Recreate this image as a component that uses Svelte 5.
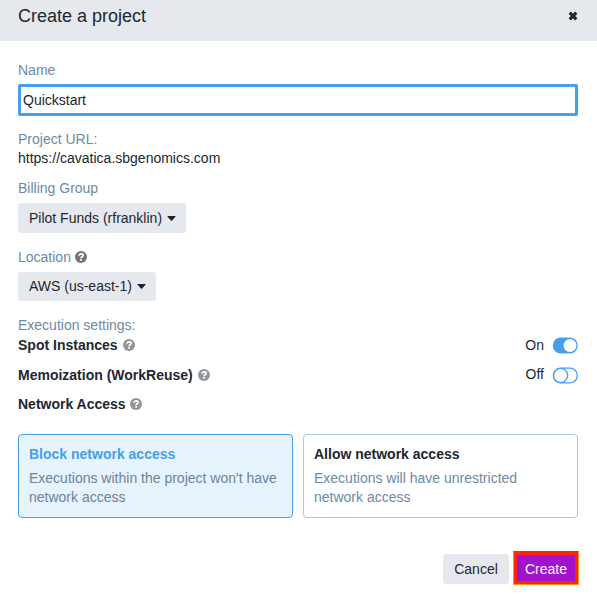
<script>
  let name = $state('Quickstart');
  let access = $state('block');
  const settings = $state([
    { label: 'Spot Instances', on: true },
    { label: 'Memoization (WorkReuse)', on: false }
  ]);
  const options = [
    { id: 'block', title: 'Block network access', lines: ["Executions within the project won't have", 'network access'] },
    { id: 'allow', title: 'Allow network access', lines: ['Executions will have unrestricted', 'network access'] }
  ];
</script>

{#snippet help(dim)}
  <svg class="help" class:dim width="12" height="12" viewBox="0 0 12 12" aria-hidden="true">
    <circle cx="6" cy="6" r="6" />
    <path d="M3.9 4.6C4.1 3.4 4.9 2.8 6.1 2.8C7.3 2.8 8.1 3.5 8.1 4.4C8.1 5.8 6.1 5.7 6.1 7.2" />
    <rect x="5.2" y="8" width="1.8" height="1.7" />
  </svg>
{/snippet}

{#snippet caret()}
  <svg class="caret" width="9" height="5" viewBox="0 0 9 5" aria-hidden="true"><path d="M.9 0H8.1Q9 0 8.4.7L4.9 4.7Q4.5 5 4.1 4.7L.6 .7Q0 0 .9 0Z" /></svg>
{/snippet}

<div class="dialog" role="dialog" aria-label="Create a project">
  <header>
    <h1>Create a project</h1>
    <button class="close" aria-label="Close">
      <svg width="10" height="10" viewBox="0 0 10 10"><path d="M1.7 1.7L8.3 8.3M8.3 1.7L1.7 8.3" /></svg>
    </button>
  </header>

  <main>
    <label class="label" for="project-name">Name</label>
    <input id="project-name" bind:value={name} />

    <div class="label url">Project URL:</div>
    <div class="address">https://cavatica.sbgenomics.com</div>

    <div class="label billing">Billing Group</div>
    <button class="select funds"><span>Pilot Funds (rfranklin)</span>{@render caret()}</button>

    <div class="label location"><span>Location</span>{@render help(false)}</div>
    <button class="select region"><span>AWS (us-east-1)</span>{@render caret()}</button>

    <div class="label execution">Execution settings:</div>
    {#each settings as setting}
      <div class="setting">
        <strong>{setting.label}</strong>{@render help(true)}
        <span class="state" class:off={!setting.on}>{setting.on ? 'On' : 'Off'}</span>
        <button class="switch" aria-label={setting.label} onclick={() => (setting.on = !setting.on)}>
          <svg width="26" height="17" viewBox="0 0 26 17">
            {#if setting.on}
              <rect x=".8" y=".5" width="25" height="16" rx="8" fill="#459fed" />
              <circle cx="18" cy="8.5" r="6.5" fill="#fff" />
            {:else}
              <rect x="1.5" y="1.1" width="23.8" height="14.8" rx="7.4" fill="#fff" stroke="#459fed" stroke-width="1.3" />
              <circle cx="8.6" cy="8.5" r="7.1" fill="#fff" stroke="#459fed" stroke-width="1.3" />
            {/if}
          </svg>
        </button>
      </div>
    {/each}
    <div class="setting network"><strong>Network Access</strong>{@render help(true)}</div>

    <div class="cards">
      {#each options as option}
        <button class="card" class:selected={access === option.id} onclick={() => (access = option.id)}>
          <strong>{option.title}</strong>
          {#each option.lines as line}<span>{line}</span>{/each}
        </button>
      {/each}
    </div>
  </main>

  <footer>
    <button class="cancel">Cancel</button>
    <button class="create">Create</button>
  </footer>
</div>

<style>
  :global(body) { background: #fff; }
  .dialog, button, input { font-family: "Liberation Sans", Arial, sans-serif; font-size: 14px; line-height: 20px; color: #1d2731; }
  .dialog { width: 597px; height: 605px; overflow: hidden; }
  *, *::before { box-sizing: border-box; }
  button { border: 0; padding: 0; margin: 0; background: none; white-space: nowrap; }
  svg { display: block; flex: none; }

  header { height: 41px; padding: 0 19px 0 18px; background: #e5e9ed; display: flex; justify-content: space-between; }
  h1 { margin: 4px 0 0; font-size: 18px; line-height: 24px; font-weight: 400; }
  .close { height: 10px; margin-top: 10.5px; }
  .close path { stroke: #1d2731; stroke-width: 3.2; }

  main { padding: 19px 19px 0 18px; display: flex; flex-direction: column; align-items: flex-start; }
  .label { height: 20px; color: #6c8aa4; display: flex; align-items: center; white-space: nowrap; }
  input { width: 560px; height: 32px; margin: 4px 0 13px; padding: 0 2px; border: 3px solid #459fed; border-radius: 2px; outline: 0; background: #fff; }
  .address { height: 20px; line-height: 18px; }
  .billing { margin-top: 9px; }
  .select { height: 30px; margin-top: 5px; padding: 0 11px; border-radius: 3px; background: #e5e9ed; display: flex; align-items: center; justify-content: space-between; }
  .funds { width: 168px; padding-right: 10.5px; }
  .region { width: 138px; height: 29px; padding: 0 10.5px 1px 11px; }
  .caret { fill: #1d2731; }
  .location { margin-top: 14px; gap: 4px; }
  .help circle { fill: #757575; }
  .help.dim circle { fill: #929599; }
  .help path { fill: none; stroke: #fff; stroke-width: 1.7; }
  .help rect { fill: #fff; }

  .execution { margin-top: 14px; }
  .setting { width: 100%; height: 20px; margin-bottom: 10px; display: flex; align-items: center; }
  .setting .help { margin-left: 5px; }
  .setting.network { margin: -1px 0 0; }
  .setting.network .help { margin-left: 4px; }
  .state { margin-left: auto; }
  .state.off { padding-bottom: 2px; }
  .switch { margin: 0 0 0 8px; }

  .cards { margin-top: 20px; display: flex; gap: 10px; }
  .card { width: 275px; height: 84px; padding: 9px 10px; border: 1px solid #b4c5d3; border-radius: 4px; background: #fff; text-align: left; display: flex; flex-direction: column; justify-content: flex-start; }
  .card strong { margin-bottom: 5px; }
  .card span { line-height: 19px; color: #6c8aa4; }
  .card.selected { border-color: #459fed; background: #e7f3fd; }
  .card.selected strong { color: #459fed; }
  .card.selected span { color: #6a8499; }

  footer { padding: 33px 18px 0 0; display: flex; justify-content: flex-end; align-items: flex-start; gap: 4px; }
  .cancel { width: 66px; height: 30px; margin-top: 3px; border-radius: 3px; background: #e5e9ed; }
  .create { width: 66px; height: 34px; padding-top: 2px; border: 1px solid #ff9b10; border-top-color: #fb2509; background: #a012cb; color: #fff; box-shadow: inset 0 0 0 3px #fb2509; }
</style>
